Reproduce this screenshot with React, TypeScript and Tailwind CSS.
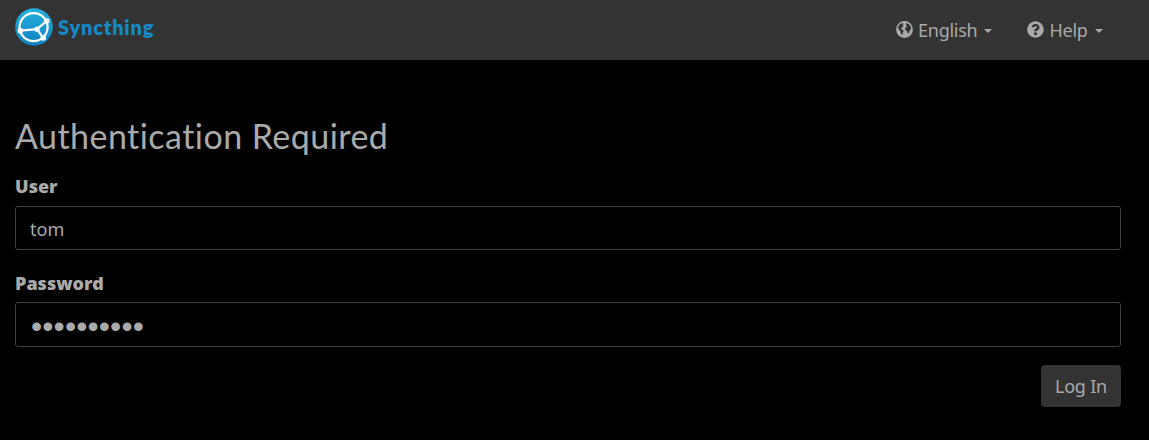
import React, { useState } from 'react';
import { FaQuestionCircle } from 'react-icons/fa';

const SyncthingLogo = () => (
  <svg viewBox="0 0 38 38" className="h-[38px] w-[38px] shrink-0" fill="none">
    <defs>
      <linearGradient id="logo-bg" x1="0" y1="0" x2="0" y2="1">
        <stop offset="0" stopColor="#24b2dd" />
        <stop offset="1" stopColor="#0f80c0" />
      </linearGradient>
    </defs>
    <circle cx="19" cy="19" r="18.8" fill="url(#logo-bg)" />
    <g stroke="#ffffff" strokeWidth="2.2">
      <circle cx="18.6" cy="19.1" r="14" />
      <path d="M22 21.2 L31.7 13 M22 21.2 L5.4 22.7 M22 21.2 L28.2 30" />
    </g>
    <g fill="#ffffff">
      <circle cx="31.7" cy="13" r="2.8" />
      <circle cx="22" cy="21.2" r="2.6" />
      <circle cx="5.4" cy="22.7" r="2.8" />
      <circle cx="28.2" cy="30" r="2.8" />
    </g>
  </svg>
);

const GlobeIcon = () => (
  <svg viewBox="0 0 17 17" className="h-[17px] w-[17px]">
    <circle cx="8.5" cy="8.5" r="8.4" fill="currentColor" />
    {/* Americas */}
    <path
      fill="#333333"
      d="M2 6.2 L3.6 3.6 L6.3 2 L7.6 3 L6.6 4.2 L7.5 5.4 L5.9 6.6 L4.8 7.8 L6.9 8.9 L7.7 10.2 L6.7 11.8 L6.1 14.2 L5 12.7 L4.7 10.4 L3 8.8 Z"
    />
    {/* Europe and Africa */}
    <path
      fill="#333333"
      d="M10.2 2.1 L13 3.2 L15 6 L14.8 8 L13.9 9.3 L13.2 11.6 L12 12.6 L11.2 10.4 L9.4 9 L9.2 6.9 L10.8 5.8 L10 4.3 Z"
    />
  </svg>
);

interface NavItemProps {
  icon: React.ReactNode;
  label: string;
  labelClass: string;
}

const NavItem: React.FC<NavItemProps> = ({ icon, label, labelClass }) => (
  <button className="flex h-[59px] items-center">
    {icon}
    <span className={`ml-[5px] whitespace-nowrap tracking-[-0.25px] ${labelClass}`}>{label}</span>
    <span className="ml-[7px] mt-[3px] border-x-[4.5px] border-t-[4.5px] border-x-transparent border-t-[#aaaaaa]" />
  </button>
);

export default function App() {
  const [user, setUser] = useState('tom');
  const [password, setPassword] = useState('syncthing1');

  return (
    <div className="min-h-screen bg-black font-['Noto_Sans','Open_Sans',sans-serif] text-[18px] leading-[26px] text-[#aaaaaa]">
      {/* Navbar */}
      <nav className="flex h-[60px] justify-between bg-[#333333] pl-[15px] pr-[46px]">
        <a className="flex h-[54px] items-center">
          <SyncthingLogo />
          <span className="ml-[5px] font-['Lato',sans-serif] text-[20px] font-extrabold tracking-[0.8px] text-[#1788c6]">
            Syncthing
          </span>
        </a>
        <div className="flex gap-[35px]">
          <NavItem icon={<GlobeIcon />} label="English" labelClass="w-[59px]" />
          <NavItem icon={<FaQuestionCircle className="h-[17px] w-[17px]" />} label="Help" labelClass="w-[39px]" />
        </div>
      </nav>

      {/* Login form */}
      <form className="flex flex-col pl-[15px] pr-[28px] pt-[57px]" onSubmit={e => e.preventDefault()}>
        <h1 className="font-['Lato',sans-serif] text-[34px] leading-[38px] tracking-[0.45px]">
          Authentication Required
        </h1>
        <label htmlFor="user" className="mt-[18px] text-[18px] font-black">User</label>
        <input
          id="user"
          value={user}
          onChange={e => setUser(e.target.value)}
          className="mt-[7px] h-[44px] rounded-[3px] border border-[#424242] px-3.5 pt-[2px] outline-none"
        />
        <label htmlFor="password" className="mt-5 text-[18px] font-black">Password</label>
        <input
          id="password"
          type="password"
          value={password}
          onChange={e => setPassword(e.target.value)}
          className="mt-[6px] h-[45px] rounded-[3px] border border-[#424242] px-[15px] pt-[4px] font-['Liberation_Sans',sans-serif] text-[32px] tracking-[0.1px] outline-none"
        />
        <button className="mt-[18px] h-[42px] w-[80px] self-end rounded-[4px] bg-[#333333] tracking-[-0.2px]">Log In</button>
      </form>
    </div>
  );
}
